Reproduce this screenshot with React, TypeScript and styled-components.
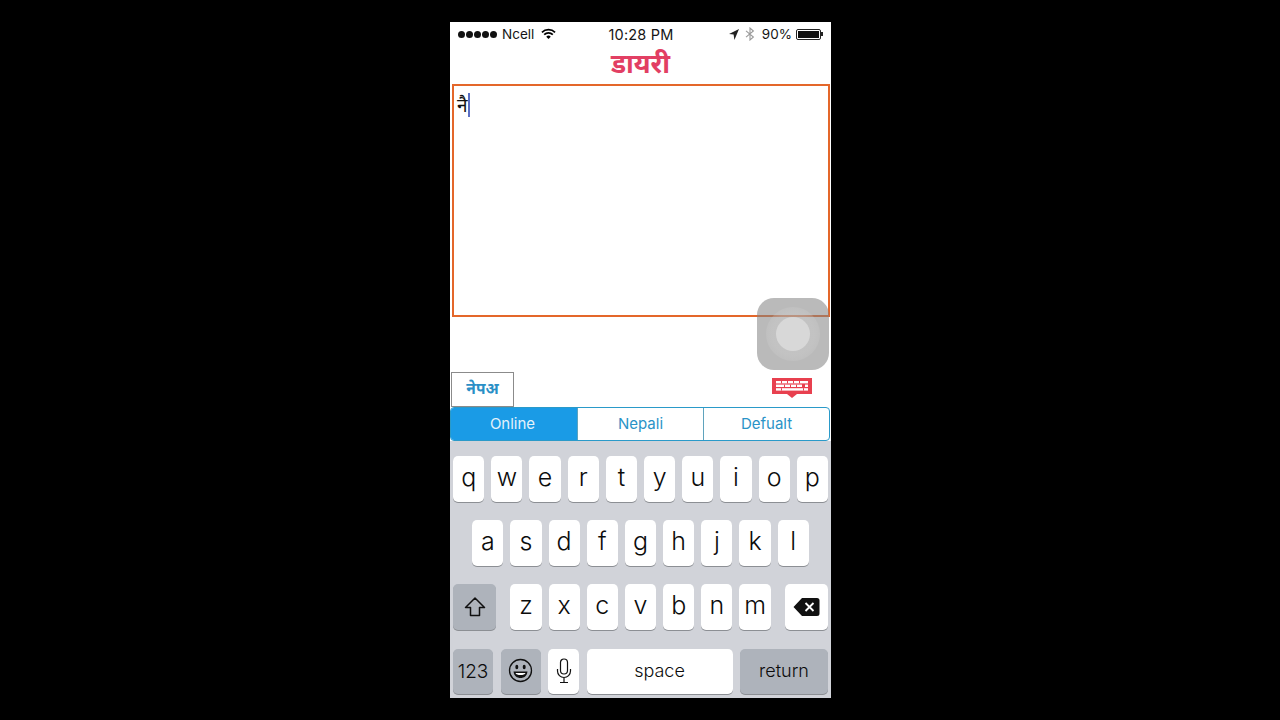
import React from "react";
import styled, { createGlobalStyle } from "styled-components";

const GlobalStyle = createGlobalStyle`
  html, body {
    margin: 0;
    height: 100%;
    background: #000;
  }
  body {
    font-family: Inter, "Noto Sans", "Liberation Sans", sans-serif;
  }
`;

const Page = styled.div`
  height: 720px;
  display: flex;
  justify-content: center;
  padding-top: 22px;
  box-sizing: border-box;
  overflow: hidden;
`;

const Phone = styled.div`
  position: relative;
  width: 381px;
  height: 676px;
  margin-left: 1px;
  background: #fff;
  display: flex;
  flex-direction: column;
`;

const StatusBar = styled.div`
  height: 24px;
  padding: 0 7px 0 8px;
  display: grid;
  grid-template-columns: 1fr auto 1fr;
  align-items: center;
  font-size: 13.5px;
  color: #151515;
`;

const StatusSide = styled.div<{ $end?: boolean }>`
  display: flex;
  align-items: center;
  justify-content: ${(p) => (p.$end ? "flex-end" : "flex-start")};
`;

const Dots = styled.div`
  display: flex;
  gap: 1px;
  margin-right: 5px;
`;

const Dot = styled.span`
  width: 7px;
  height: 7px;
  border-radius: 50%;
  background: #111;
`;

const Clock = styled.div`
  font-size: 14.5px;
  letter-spacing: 0.2px;
`;

const Battery = styled.div`
  position: relative;
  width: 25px;
  height: 11px;
  margin: 0 3px 0 4px;
  border: 1px solid #222;
  border-radius: 2px;
  box-sizing: border-box;
  padding: 1px;
  &::after {
    content: "";
    position: absolute;
    right: -3px;
    top: 2.5px;
    width: 2px;
    height: 4px;
    background: #222;
  }
`;

const BatteryFill = styled.div`
  height: 100%;
  background: #111;
`;

const Title = styled.div`
  height: 38px;
  padding-bottom: 4px;
  box-sizing: border-box;
  display: flex;
  align-items: center;
  justify-content: center;
  font-family: "Noto Sans", "Noto Sans Devanagari", sans-serif;
  font-size: 26.5px;
  font-weight: 700;
  color: #e23f63;
`;

const Editor = styled.div`
  height: 233px;
  margin: 0 1px 0 2px;
  box-sizing: border-box;
  border: 2.5px solid #e4672a;
  padding: 3px 3px;
  font-family: "Noto Sans", "Noto Sans Devanagari", sans-serif;
  font-size: 19px;
  line-height: 32px;
  color: #111;
  display: flex;
  align-items: flex-start;
`;

const Caret = styled.span`
  width: 2px;
  height: 24px;
  margin-top: 4px;
  background: #5b6fc4;
`;

const Floating = styled.div`
  position: absolute;
  left: 307px;
  top: 276px;
  width: 72px;
  height: 72px;
  border-radius: 17px;
  background: rgba(130, 130, 130, 0.55);
  display: flex;
  align-items: center;
  justify-content: center;
`;

const FloatingRing = styled.div`
  width: 54px;
  height: 54px;
  border-radius: 50%;
  background: radial-gradient(circle, rgba(215, 215, 215, 0.3) 55%, rgba(215, 215, 215, 0) 100%);
  display: flex;
  align-items: center;
  justify-content: center;
`;

const FloatingCore = styled.div`
  width: 34px;
  height: 34px;
  border-radius: 50%;
  background: #d8d8d8;
`;

const ToolRow = styled.div`
  margin-top: 55px;
  height: 35px;
  padding: 0 19px 0 1px;
  display: flex;
  align-items: flex-start;
  justify-content: space-between;
`;

const LangButton = styled.div`
  width: 63px;
  height: 35px;
  padding-bottom: 3px;
  box-sizing: border-box;
  border: 1px solid #8b8b8b;
  display: flex;
  align-items: center;
  justify-content: center;
  font-family: "Noto Sans", "Noto Sans Devanagari", sans-serif;
  font-size: 15.5px;
  font-weight: 700;
  color: #2a8fc6;
`;

const KeyboardIcon = styled.svg`
  margin-top: 6px;
`;

const Segments = styled.div`
  height: 34px;
  margin-right: 1px;
  box-sizing: border-box;
  border: 1px solid #2a9ac9;
  border-radius: 4px;
  display: grid;
  grid-template-columns: repeat(3, 1fr);
  overflow: hidden;
  background: #fff;
`;

const Segment = styled.div<{ $active?: boolean }>`
  display: flex;
  align-items: center;
  justify-content: center;
  font-size: 15px;
  padding-bottom: 1px;
  padding-right: ${(p) => (p.$active ? 3 : 0)}px;
  color: ${(p) => (p.$active ? "#e4f2fb" : "#2a93c7")};
  background: ${(p) => (p.$active ? "#1a9be6" : "transparent")};
  & + & {
    border-left: 1px solid #5fa3bd;
  }
`;

const Keyboard = styled.div`
  flex: 1;
  background: #d1d3d9;
  padding: 15px 3px 0;
  display: flex;
  flex-direction: column;
  gap: 18.7px;
`;

const KeyRow = styled.div<{ $between?: boolean }>`
  display: flex;
  justify-content: ${(p) => (p.$between ? "space-between" : "center")};
  gap: 7px;
`;

const Key = styled.div<{ $width?: number; $grow?: boolean; $dark?: boolean; $size?: number; $lift?: number }>`
  width: ${(p) => p.$width ?? 31.2}px;
  flex: ${(p) => (p.$grow ? 1 : "none")};
  height: 45.5px;
  border-radius: 5px;
  display: flex;
  align-items: center;
  justify-content: center;
  padding-bottom: ${(p) => p.$lift ?? 4}px;
  box-sizing: border-box;
  font-size: ${(p) => p.$size ?? 25}px;
  font-weight: 300;
  color: #0c0c0c;
  background: ${(p) => (p.$dark ? "#aeb3bb" : "#fff")};
  box-shadow: 0 1px 0 #8c8f94;
`;

const LetterGroup = styled.div`
  display: flex;
  gap: 7px;
`;

const BottomRow = styled.div`
  display: flex;
  gap: 7.5px;
`;

const rowOne = "qwertyuiop".split("");
const rowTwo = "asdfghjkl".split("");
const rowThree = "zxcvbnm".split("");

function App() {
  return (
    <>
      <GlobalStyle />
      <Page>
        <Phone>
          <StatusBar>
            <StatusSide>
              <Dots>
                <Dot />
                <Dot />
                <Dot />
                <Dot />
                <Dot />
              </Dots>
              Ncell
              <svg width="15" height="12" viewBox="0 0 16 12" style={{ marginLeft: 7 }}>
                <path d="M1 4.2a10 10 0 0 1 14 0" fill="none" stroke="#000" strokeWidth="1.8" />
                <path d="M3.4 6.6a6.6 6.6 0 0 1 9.2 0" fill="none" stroke="#000" strokeWidth="1.8" />
                <path d="M5.6 8.8a3.4 3.4 0 0 1 4.8 0L8 11.2z" fill="#000" />
              </svg>
            </StatusSide>
            <Clock>10:28 PM</Clock>
            <StatusSide $end>
              <svg width="10" height="11" viewBox="0 0 10 11">
                <path d="M10 0 L0 5 L4.6 5.6 L5.4 11z" fill="#222" />
              </svg>
              <svg width="10" height="14" viewBox="0 0 10 14" style={{ margin: "0 7px 0 6px" }}>
                <path d="M1 3.8 L8.4 10 L5 13 V1 L8.4 4 L1 10.2" fill="none" stroke="#9a9a9a" strokeWidth="1.1" />
              </svg>
              90%
              <Battery>
                <BatteryFill />
              </Battery>
            </StatusSide>
          </StatusBar>
          <Title>डायरी</Title>
          <Editor>
            नै
            <Caret />
          </Editor>
          <ToolRow>
            <LangButton>नेपअ</LangButton>
            <KeyboardIcon width="40" height="20" viewBox="0 0 40 20">
              <path d="M0 0H40V16H25L20 20L15 16H0z" fill="#e8404f" />
              <g fill="#fff">
                <rect x="4" y="3" width="32" height="2.4" />
                <rect x="4" y="6.6" width="26" height="2.4" />
                <rect x="33" y="6.6" width="3" height="2.4" />
                <rect x="4" y="10.2" width="32" height="2.4" />
              </g>
              <g fill="#e8404f">
                <rect x="9" y="3" width="1" height="2.4" />
                <rect x="15" y="3" width="1" height="2.4" />
                <rect x="21" y="3" width="1" height="2.4" />
                <rect x="27" y="3" width="1" height="2.4" />
                <rect x="12" y="6.6" width="1" height="2.4" />
                <rect x="18" y="6.6" width="1" height="2.4" />
                <rect x="24" y="6.6" width="1" height="2.4" />
                <rect x="9" y="10.2" width="1" height="2.4" />
                <rect x="31" y="10.2" width="1" height="2.4" />
              </g>
            </KeyboardIcon>
          </ToolRow>
          <Segments>
            <Segment $active>Online</Segment>
            <Segment>Nepali</Segment>
            <Segment>Defualt</Segment>
          </Segments>
          <Keyboard>
            <KeyRow>
              {rowOne.map((k) => (
                <Key key={k}>{k}</Key>
              ))}
            </KeyRow>
            <KeyRow>
              {rowTwo.map((k) => (
                <Key key={k}>{k}</Key>
              ))}
            </KeyRow>
            <KeyRow $between>
              <Key $width={43} $dark $lift={0}>
                <svg width="22" height="22" viewBox="0 0 22 22">
                  <path d="M11 2 L20.5 11.5 H15.5 V19.5 H6.5 V11.5 H1.5z" fill="none" stroke="#111" strokeWidth="1.5" strokeLinejoin="round" />
                </svg>
              </Key>
              <LetterGroup>
                {rowThree.map((k) => (
                  <Key key={k}>{k}</Key>
                ))}
              </LetterGroup>
              <Key $width={43} $lift={0}>
                <svg width="27" height="20" viewBox="0 0 27 20">
                  <path d="M9 1 H24 a2.5 2.5 0 0 1 2.5 2.5 V16.5 a2.5 2.5 0 0 1 -2.5 2.5 H9 L0.5 10z" fill="#111" />
                  <path d="M12.5 6 L20.5 14 M20.5 6 L12.5 14" stroke="#fff" strokeWidth="1.8" />
                </svg>
              </Key>
            </KeyRow>
            <BottomRow>
              <Key $width={40} $dark $size={19} $lift={0}>
                123
              </Key>
              <Key $width={40} $dark $lift={2}>
                <svg width="25" height="25" viewBox="0 0 25 25">
                  <circle cx="12.5" cy="12.5" r="11" fill="none" stroke="#111" strokeWidth="1.3" />
                  <ellipse cx="8.8" cy="9" rx="1.5" ry="2.2" fill="#111" />
                  <ellipse cx="16.2" cy="9" rx="1.5" ry="2.2" fill="#111" />
                  <path d="M5.5 13.5 H19.5 C19 18 16 20 12.5 20 C9 20 6 18 5.5 13.5z" fill="#111" />
                  <path d="M7.5 15 H17.5 C17 16.4 15 17 12.5 17 C10 17 8 16.4 7.5 15z" fill="#fff" />
                </svg>
              </Key>
              <Key $width={31} $lift={0}>
                <svg width="16" height="26" viewBox="0 0 16 26">
                  <rect x="4.5" y="1" width="7" height="15" rx="3.5" fill="none" stroke="#111" strokeWidth="1.2" />
                  <path d="M1.5 11 V13 a6.5 6.5 0 0 0 13 0 V11 M8 19.5 V24 M4 24.5 H12" fill="none" stroke="#111" strokeWidth="1.2" />
                </svg>
              </Key>
              <Key $grow $size={18} $lift={2}>
                space
              </Key>
              <Key $width={88} $dark $size={18} $lift={2}>
                return
              </Key>
            </BottomRow>
          </Keyboard>
          <Floating>
            <FloatingRing>
              <FloatingCore />
            </FloatingRing>
          </Floating>
        </Phone>
      </Page>
    </>
  );
}

export default App;
